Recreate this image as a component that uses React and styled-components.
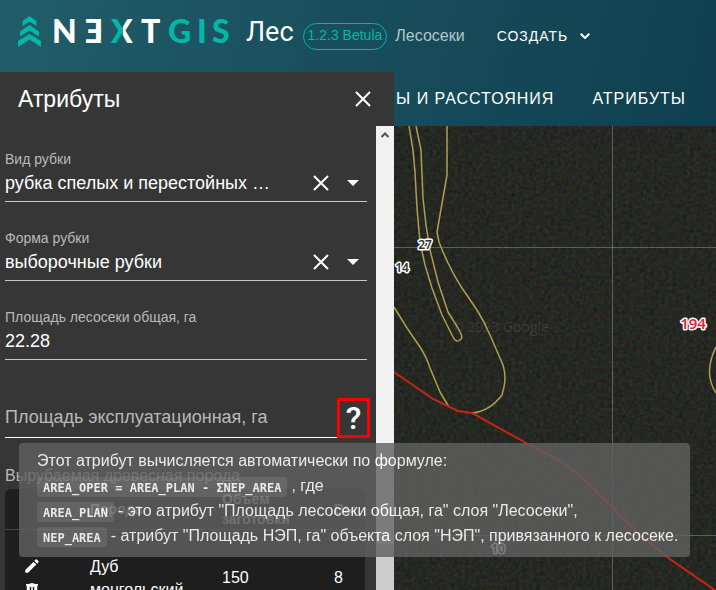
import React from "react";
import styled, { createGlobalStyle } from "styled-components";

const GlobalStyle = createGlobalStyle`
  * { box-sizing: border-box; }
  body {
    margin: 0;
    font-family: "Liberation Sans", Arial, sans-serif;
    color: #fff;
    background: #363636;
  }
  button, input, select { font: inherit; color: inherit; }
`;

const Page = styled.div`
  position: relative;
  display: flex;
  flex-direction: column;
  height: 100vh;
  overflow: hidden;
  background: linear-gradient(100deg, #215d69 0%, #194f5d 45%, #0f3f4e 100%) 0 0 / 100% 126px no-repeat;
`;

const Header = styled.header`
  display: flex;
  align-items: center;
  flex: none;
  height: 72px;
  padding-left: 18px;
  white-space: nowrap;
`;

const LogoLink = styled.a`
  display: flex;
  flex: none;
  text-decoration: none;
`;

const LogoSvg = styled.svg`
  display: block;
  overflow: visible;
  font-family: Lato, "Noto Sans", sans-serif;
  font-size: 32px;
  font-weight: 900;
`;

const Product = styled.span`
  margin: 0 9px 8px 14px;
  font: 27px/32px Roboto, sans-serif;
`;

const Version = styled.span`
  height: 27px;
  padding: 0 4px;
  border: 1px solid #00b8a5;
  border-radius: 14px;
  color: #00b8a5;
  font-size: 14px;
  line-height: 23px;
`;

const Section = styled.span`
  margin-left: 8px;
  color: #b6c5c9;
  font-size: 16px;
`;

const CreateButton = styled.button`
  display: flex;
  align-items: center;
  gap: 12px;
  margin-left: 32px;
  padding: 0;
  border: 0;
  background: none;
  font-size: 14px;
  letter-spacing: 1px;
`;

const Body = styled.div`
  display: flex;
  flex: 1;
  min-height: 0;
`;

const Sidebar = styled.aside`
  display: flex;
  flex-direction: column;
  flex: none;
  width: 394px;
  background: #363636;
  overflow: hidden;
`;

const SidebarHeader = styled.div`
  display: flex;
  align-items: center;
  justify-content: space-between;
  flex: none;
  height: 54px;
  padding: 0 23px 0 18px;
`;

const Title = styled.h1`
  margin: 0;
  font-size: 23px;
  font-weight: 400;
`;

const IconButton = styled.button`
  display: flex;
  padding: 0;
  border: 0;
  background: none;
`;

const Scroller = styled.div`
  display: flex;
  flex: 1;
  min-height: 0;
`;

const Form = styled.form`
  flex: 1;
  min-width: 0;
  padding: 23px 9px 0 5px;
`;

const Field = styled.div`
  margin-bottom: 26px;
  border-bottom: 1px solid #c8c8c8;
`;

const Label = styled.label`
  display: block;
  color: #b9b9b9;
  font-size: 14px;
  line-height: 20px;
`;

const Control = styled.div`
  display: flex;
  align-items: center;
  height: 32px;
  padding: 0 7px 4px 0;
`;

const Select = styled.select`
  flex: 1;
  min-width: 0;
  height: 28px;
  padding: 0;
  border: 0;
  outline: 0;
  background: none;
  appearance: none;
  font-size: 18px;
`;

const Input = styled.input`
  flex: 1;
  min-width: 0;
  height: 28px;
  padding: 0;
  border: 0;
  outline: 0;
  background: none;
  font-size: 18px;
`;

const Arrow = styled.svg`
  flex: none;
  margin-left: 17px;
`;

const HelpRow = styled.div`
  display: flex;
  height: 40px;
  margin: 38px -3px 0 0;
`;

const AreaInput = styled(Input)`
  height: 40px;
  border-bottom: 1px solid #fff;
  &::placeholder { color: #b9b9b9; opacity: 1; }
`;

const HelpButton = styled.button`
  display: flex;
  align-items: center;
  justify-content: center;
  width: 33px;
  padding: 0;
  border: 3px solid #f00;
  background: none;
  font: 500 32px/34px Roboto, sans-serif;
`;

const SectionLabel = styled.div`
  margin: 28px 0 3px;
  color: #b9b9b9;
  font-size: 16px;
  line-height: 20px;
`;

const TableBox = styled.div`
  margin-right: 2px;
  border-radius: 6px;
  background: #1e1e1e;
  overflow: hidden;
`;

const Table = styled.table`
  width: 100%;
  table-layout: fixed;
  border-collapse: collapse;
  text-align: left;
`;

const Th = styled.th`
  width: ${(p) => p.$width};
  height: 40px;
  padding: 0;
  border-bottom: 1px solid #464646;
  color: #bcbcbc;
  font-size: 14px;
  line-height: 20px;
`;

const Td = styled.td`
  height: 96px;
  padding: 0;
  font-size: 16px;
  line-height: 23px;
`;

const RowActions = styled.div`
  display: flex;
  flex-direction: column;
  gap: 6px;
  padding-left: 18px;
`;

const ScrollTrack = styled.div`
  display: flex;
  flex-direction: column;
  flex: none;
  width: 18px;
  background: #f1f1f1;
`;

const ScrollArrow = styled.svg`
  flex: none;
  margin: 4px auto 0;
`;

const ScrollThumb = styled.div`
  height: 10%;
  margin-top: auto;
  background: #cdcdcd;
`;

const Main = styled.main`
  display: flex;
  flex-direction: column;
  flex: 1;
  min-width: 0;
  overflow: hidden;
`;

const Nav = styled.nav`
  display: flex;
  align-items: center;
  justify-content: flex-end;
  gap: 38px;
  flex: none;
  height: 54px;
  padding-right: 30px;
  white-space: nowrap;
  overflow: hidden;
`;

const NavLink = styled.a`
  color: #fff;
  font-size: 16px;
  letter-spacing: 1px;
  text-decoration: none;
`;

const MapSvg = styled.svg`
  display: block;
  flex: 1;
  width: 100%;
  min-height: 0;
  background: #252823;
`;

const Tooltip = styled.div`
  position: absolute;
  left: 19px;
  top: 443px;
  padding: 5px 12px 9px 18px;
  border-radius: 4px;
  background: rgba(97, 97, 97, 0.9);
  opacity: 0.9;
  font-size: 16px;
  line-height: 25px;
  white-space: nowrap;
`;

const TooltipLine = styled.div`
  display: flex;
  align-items: center;
  gap: 4px;
  height: 25px;
`;

const Code = styled.code`
  height: 20px;
  margin-top: 2px;
  padding: 0 6px;
  border-radius: 3px;
  background: rgba(255, 255, 255, 0.1);
  font: 700 12px/22px "DejaVu Sans Mono", monospace;
`;

const Logo = () => (
  <LogoSvg width="214" height="40" viewBox="0 0 214 40" role="img" aria-label="NextGIS">
    <defs>
      <linearGradient id="xSplit" x1="0" x2="1" y1="0" y2="0">
        <stop offset="0.56" stopColor="#00b8a5" />
        <stop offset="0.56" stopColor="#fff" />
      </linearGradient>
    </defs>
    <g fill="#00b8a5">
      <path d="M11.5 0 18.5 5V10L11.5 5.5 4.5 10V5Z" />
      <path d="M11.5 9 21 15.5V20.500L11.500 14.500 2 20.500V15.500Z" />
      <path d="M11.5 18 23 25V31L11.500 23.500 0 31V25Z" />
    </g>
    <g fill="#fff">
      <text x="34" y="27">N</text>
      <text x="67" y="27">Ǝ</text>
      <text x="93" y="27" fill="url(#xSplit)">X</text>
      <text x="123" y="27">T</text>
    </g>
    <g fill="#00b8a5">
      <text x="150" y="27">G</text>
      <text x="179" y="27">I</text>
      <text x="194" y="27">S</text>
    </g>
  </LogoSvg>
);

const Cross = () => (
  <svg width="16" height="16" viewBox="0 0 16 16" fill="none" stroke="#fff" strokeWidth="2">
    <path d="M1 1 15 15M15 1 1 15" />
  </svg>
);

const SelectField = ({ id, label, value }) => (
  <Field>
    <Label htmlFor={id}>{label}</Label>
    <Control>
      <Select id={id} defaultValue={value}>
        <option>{value}</option>
      </Select>
      <IconButton type="button" aria-label={`Очистить: ${label}`}>
        <Cross />
      </IconButton>
      <Arrow width="14" height="6" viewBox="0 0 14 6" fill="#fff">
        <path d="M1 0H13L7 6Z" />
      </Arrow>
    </Control>
  </Field>
);

const ForestMap = () => (
  <MapSvg viewBox="0 0 322 464" preserveAspectRatio="xMinYMin slice">
    <defs>
      <filter id="grain" x="0" y="0" width="100%" height="100%" colorInterpolationFilters="sRGB">
        <feTurbulence type="fractalNoise" baseFrequency="0.28" numOctaves="3" seed="7" />
        <feColorMatrix values="0.16 0 0 0 0.065  0 0.16 0 0 0.075  0 0 0.14 0 0.065  0 0 0 0 1" />
      </filter>
    </defs>
    <rect width="322" height="464" filter="url(#grain)" />
    <g stroke="#8c8c8c" strokeOpacity="0.55">
      <path d="M218.500 0V464M0 121.500H322M0 409.500H322" />
    </g>
    <text x="58" y="206" fill="#fff" fillOpacity="0.1" fontSize="14" fontFamily="Open Sans, sans-serif">© 2023 Google</text>
    <g fill="none" stroke="#ad9f4d" strokeWidth="1.5" strokeLinejoin="round">
      <path d="M15 0 19 24 21 46 23 82 26 116 31 139 38 162 48 189 59 211Q62 217 66 214 69 212 67 208L64 202 54 186 44 156 36 124 32 99 29 72 28 49 27 24 22 0" />
      <path d="M53 0V49L43 106 45 116Q55 142 68 162L83 184Q90 195 96 209L109 239C113 252 110 262 108 269 99 281 89 286 78 287" />
      <path d="M0 181 13 202 26 221Q32 230 36 242L46 266 55 281" />
      <path d="M322 221Q309 247 322 267" />
    </g>
    <path d="M0 246 39 273 64 285 78 287 134 318 166 335Q180 344 198 361L243 406 273 431 322 465" fill="none" stroke="#c52615" strokeWidth="2" />
    <g fill="#333" stroke="#fff" strokeWidth="3" strokeLinejoin="round" paintOrder="stroke" textAnchor="middle" fontFamily="Noto Sans, sans-serif" fontSize="12" fontWeight="600">
      <text x="31" y="123">27</text>
      <text x="8" y="146">14</text>
      <text x="104" y="427">10</text>
      <text x="299" y="203" fill="#e0273a" fontSize="15">194</text>
    </g>
  </MapSvg>
);

export default function App() {
  return (
    <Page>
      <GlobalStyle />
      <Header>
        <LogoLink href="#">
          <Logo />
        </LogoLink>
        <Product>Лес</Product>
        <Version>1.2.3 Betula</Version>
        <Section>Лесосеки</Section>
        <CreateButton type="button">
          СОЗДАТЬ
          <svg width="10" height="6" viewBox="0 0 10 6" fill="none" stroke="#fff" strokeWidth="2">
            <path d="M0.700 0.700 5 5 9.300 0.700" />
          </svg>
        </CreateButton>
      </Header>
      <Body>
        <Sidebar>
          <SidebarHeader>
            <Title>Атрибуты</Title>
            <IconButton type="button" aria-label="Закрыть">
              <Cross />
            </IconButton>
          </SidebarHeader>
          <Scroller>
            <Form>
              <SelectField id="kind" label="Вид рубки" value="рубка спелых и перестойных …" />
              <SelectField id="form" label="Форма рубки" value="выборочные рубки" />
              <Field>
                <Label htmlFor="total">Площадь лесосеки общая, га</Label>
                <Control>
                  <Input id="total" defaultValue="22.28" />
                </Control>
              </Field>
              <HelpRow>
                <AreaInput aria-label="Площадь эксплуатационная, га" placeholder="Площадь эксплуатационная, га" />
                <HelpButton type="button" aria-describedby="area-help">?</HelpButton>
              </HelpRow>
              <SectionLabel id="species">Вырубаемая древесная порода</SectionLabel>
              <TableBox>
                <Table aria-labelledby="species">
                  <thead>
                    <tr>
                      <Th $width="85px" />
                      <Th $width="132px">Порода</Th>
                      <Th $width="112px">Объем<br />заготовки</Th>
                      <Th>Вы</Th>
                    </tr>
                  </thead>
                  <tbody>
                    <tr>
                      <Td>
                        <RowActions>
                          <IconButton type="button" aria-label="Изменить">
                            <svg width="18" height="18" viewBox="0 0 24 24" fill="#fff">
                              <path d="M20.710 7.040c.39-.39.39-1.040 0-1.410l-2.340-2.340c-.37-.39-1.020-.39-1.410 0l-1.840 1.830 3.750 3.750M3 17.250V21h3.750L17.810 9.930l-3.750-3.750L3 17.250Z" />
                            </svg>
                          </IconButton>
                          <IconButton type="button" aria-label="Удалить">
                            <svg width="18" height="18" viewBox="0 0 24 24" fill="#fff">
                              <path fillRule="evenodd" d="M9 3v1H4v2h1v13a2 2 0 0 0 2 2h10a2 2 0 0 0 2-2V6h1V4h-5V3H9m0 5h2v9H9V8m4 0h2v9h-2V8Z" />
                            </svg>
                          </IconButton>
                        </RowActions>
                      </Td>
                      <Td>Дуб<br />монгольский</Td>
                      <Td>150</Td>
                      <Td>8</Td>
                    </tr>
                  </tbody>
                </Table>
              </TableBox>
            </Form>
            <ScrollTrack>
              <ScrollArrow width="10" height="10" viewBox="0 0 10 10" fill="none" stroke="#505050" strokeWidth="2">
                <path d="M1.500 7 5 3.500 8.500 7" />
              </ScrollArrow>
              <ScrollThumb />
            </ScrollTrack>
          </Scroller>
        </Sidebar>
        <Main>
          <Nav>
            <NavLink href="#">Ы И РАССТОЯНИЯ</NavLink>
            <NavLink href="#">АТРИБУТЫ</NavLink>
          </Nav>
          <ForestMap />
        </Main>
      </Body>
      <Tooltip role="tooltip" id="area-help">
        <TooltipLine>Этот атрибут вычисляется автоматически по формуле:</TooltipLine>
        <TooltipLine><Code>AREA_OPER = AREA_PLAN - ΣNEP_AREA</Code>, где</TooltipLine>
        <TooltipLine><Code>AREA_PLAN</Code>- это атрибут "Площадь лесосеки общая, га" слоя "Лесосеки",</TooltipLine>
        <TooltipLine><Code>NEP_AREA</Code>- атрибут "Площадь НЭП, га" объекта слоя "НЭП", привязанного к лесосеке.</TooltipLine>
      </Tooltip>
    </Page>
  );
}
